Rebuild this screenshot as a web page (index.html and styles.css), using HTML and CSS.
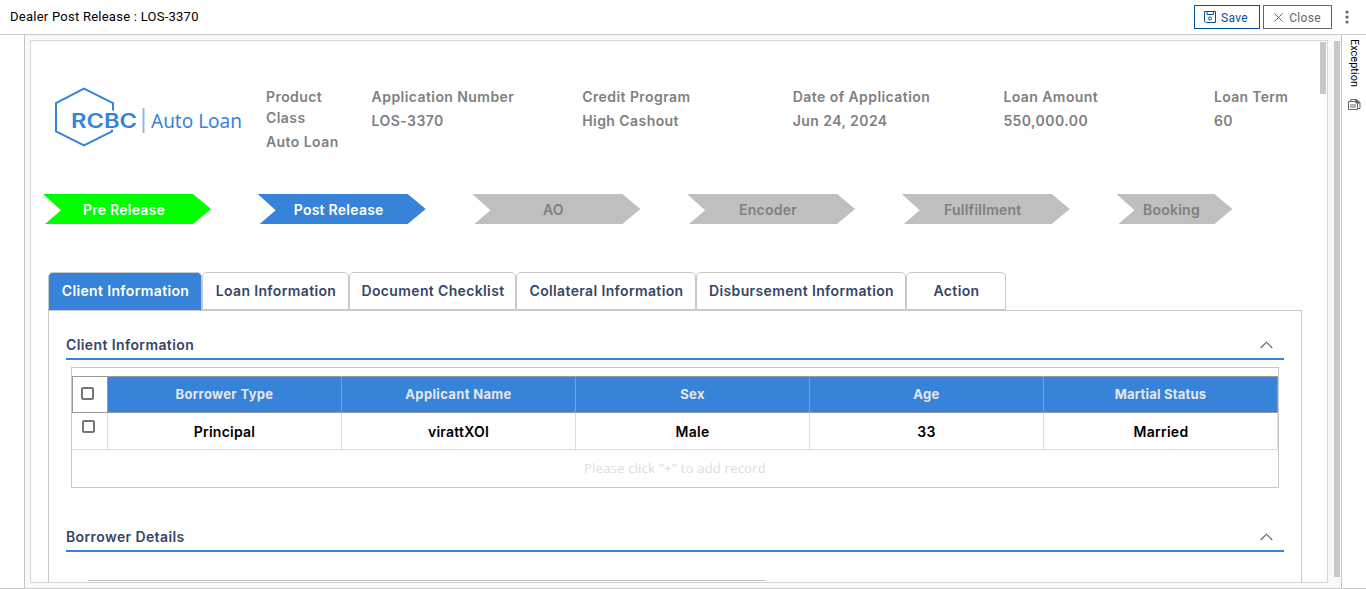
FILE: index.html
```html
<!DOCTYPE html>
<html lang="en">
<head>
<meta charset="utf-8">
<title>Dealer Post Release</title>
<link rel="stylesheet" href="styles.css">
</head>
<body>
<div class="app">
  <header class="topbar">
    <div class="title">Dealer Post Release : LOS-3370</div>
    <div class="actions">
      <button class="btn save"><svg width="12" height="12" viewBox="0 0 12 12" fill="none" stroke="#00539b"><path d="M.5.5h11v11H2l-1.500-1.500zM3 .5v3h6.500v-3"/><circle cx="6" cy="7.500" r="1.500"/></svg><span>Save</span></button>
      <button class="btn close"><svg width="9" height="9" viewBox="0 0 9 9" fill="none" stroke="#666"><path d="M.5.5l8 8M8.500.5l-8 8"/></svg><span>Close</span></button>
      <svg class="more" width="4" height="14" viewBox="0 0 4 14" fill="#666"><circle cx="2" cy="2" r="1.600"/><circle cx="2" cy="7" r="1.600"/><circle cx="2" cy="12" r="1.600"/></svg>
    </div>
  </header>
  <div class="body">
    <aside class="left"></aside>
    <main class="canvas">
      <div class="sheet">
        <section class="summary">
          <svg class="logo" width="200" height="62" viewBox="0 0 200 62">
            <g fill="none" stroke="#3783d9" stroke-width="2"><path d="M59 24.500V17L30 2.500 2 17v28.500l28 14 28-14V43.500"/></g>
            <path d="M89.500 22v25" stroke="#8db7e8" stroke-width="2"/>
            <text class="brand" x="17" y="42" textLength="66" lengthAdjust="spacingAndGlyphs">RCBC</text>
            <text class="product" x="97" y="42" textLength="91" lengthAdjust="spacingAndGlyphs">Auto Loan</text>
          </svg>
          <dl class="facts">
            <div class="fact first"><dt>Product Class</dt><dd>Auto Loan</dd></div>
            <div class="fact"><dt>Application Number</dt><dd>LOS-3370</dd></div>
            <div class="fact"><dt>Credit Program</dt><dd>High Cashout</dd></div>
            <div class="fact"><dt>Date of Application</dt><dd>Jun 24, 2024</dd></div>
            <div class="fact"><dt>Loan Amount</dt><dd>550,000.00</dd></div>
            <div class="fact last"><dt>Loan Term</dt><dd>60</dd></div>
          </dl>
        </section>
        <nav class="steps">
          <div class="step done">Pre Release</div>
          <div class="step current">Post Release</div>
          <div class="step">AO</div>
          <div class="step">Encoder</div>
          <div class="step">Fullfillment</div>
          <div class="step short">Booking</div>
        </nav>
        <div class="tabs">
          <div class="tab t1 active">Client Information</div>
          <div class="tab t2">Loan Information</div>
          <div class="tab t3">Document Checklist</div>
          <div class="tab t4">Collateral Information</div>
          <div class="tab t5">Disbursement Information</div>
          <div class="tab t6">Action</div>
        </div>
        <div class="pane">
          <div class="section-head"><span>Client Information</span><svg width="13" height="8" viewBox="0 0 13 8" fill="none" stroke="#4a5b7c" stroke-width="1.100"><path d="M.7 7l5.800-5.800L12.300 7"/></svg></div>
          <div class="grid-box">
            <div class="row head">
              <div class="check"><i class="box"></i></div>
              <div class="cell">Borrower Type</div><div class="cell">Applicant Name</div><div class="cell">Sex</div><div class="cell">Age</div><div class="cell status">Martial Status</div>
            </div>
            <div class="row data">
              <div class="check"><i class="box"></i></div>
              <div class="cell">Principal</div><div class="cell">virattXOI</div><div class="cell">Male</div><div class="cell">33</div><div class="cell">Married</div>
            </div>
            <div class="hint">Please click "+" to add record</div>
          </div>
          <div class="section-head second"><span>Borrower Details</span><svg width="13" height="8" viewBox="0 0 13 8" fill="none" stroke="#4a5b7c" stroke-width="1.100"><path d="M.7 7l5.800-5.800L12.300 7"/></svg></div>
          <div class="subframe"></div>
        </div>
        <div class="inner-thumb"></div>
      </div>
      <div class="outer-thumb"></div>
    </main>
    <aside class="right">
      <div class="exception">Exception</div>
      <svg width="13" height="11" viewBox="0 0 13 11" fill="none" stroke="#666"><path d="M2.500 2.500V.5h6l3.500 3v6h-2M.5 2.500h9v8h-9zM3 5v4M5 5v4M7 5v4"/><path d="M7 0l5 4H8z" fill="#666"/></svg>
    </aside>
  </div>
</div>
</body>
</html>
```
FILE: styles.css
```css
* { box-sizing: border-box; }
body { margin: 0; background: #fff; font-family: Inter, sans-serif; font-size: 14px; }
.app { width: 1366px; height: 589px; display: flex; flex-direction: column; overflow: hidden; border-bottom: 1px solid #ccc; }
.topbar { height: 35px; flex: none; border-bottom: 1px solid #ccc; display: flex; justify-content: space-between; padding-left: 10px; }
.title { font: 13px/33px Roboto, sans-serif; color: #000; letter-spacing: .25px; }
.actions { display: flex; padding: 5px 17px 0 0; gap: 3px; align-items: flex-start; }
.btn { height: 24px; border: 1px solid #666; background: #fff; color: #666; padding: 0; display: flex; align-items: center; justify-content: center; font: 12px/24px Roboto, sans-serif; letter-spacing: .3px; }
.btn span { padding-top: 1px; }
.save { width: 66px; border-color: #00539b; color: #00539b; gap: 5px; padding-right: 2px; }
.close { width: 69px; gap: 6px; }
.more { margin: 5px 0 0 10px; }
.body { flex: 1; display: flex; min-height: 0; }
.left { width: 25px; border-right: 1px solid #c4c4c4; }
.canvas { width: 1316px; background: #f8f9fb; display: flex; padding: 5px 1px 5px 5px; justify-content: space-between; }
.outer-thumb { width: 6px; height: 536px; margin-top: 1px; background: #c8c8c8; }
.right { width: 25px; border-left: 1px solid #c4c4c4; padding: 4px 0 0 6px; }
.exception { writing-mode: vertical-rl; font: 11px/13px Roboto, sans-serif; height: 60px; }
.right svg { display: block; }
.sheet { position: relative; width: 1298px; height: 543px; border: 1px solid #d3d6da; background: #fff; overflow: hidden; }
.inner-thumb { position: absolute; right: 1px; top: 1px; width: 6px; height: 52px; background: #c8c8c8; }
.summary { height: 153px; display: flex; padding: 45px 0 0 23px; }
.logo { flex: none; margin: 0 12px 0 0; }
.brand { font: 600 19.500px Inter, sans-serif; fill: #3783d9; }
.product { font: 20px "Noto Sans", sans-serif; fill: #3783d9; }
.facts { margin: 0; display: flex; color: #808080; font-weight: 600; line-height: 21px; letter-spacing: .43px; }
.fact { width: 210.6px; flex: none; }
.first { width: 105.6px; padding-right: 20px; }
.last { width: 90px; letter-spacing: .3px; }
.fact dd { margin: 3px 0 0; white-space: nowrap; }
.steps { display: flex; padding-left: 12px; gap: 46.700px; }
.step { width: 168px; height: 30px; flex: none; background: #bfbfbf; color: #808080; font-weight: 600; letter-spacing: .25px; line-height: 32px; text-align: center; padding-right: 6px; clip-path: polygon(0 0, calc(100% - 18px) 0, 100% 50%, calc(100% - 18px) 100%, 2px 100%, 18px 54%); }
.done { background: #0f0; color: #fff; }
.current { background: #3783d9; color: #fff; }
.short { width: 116px; }
.tabs { display: flex; margin: 48px 0 0 17px; height: 38px; }
.tab { border: 1px solid #c8c8c8; border-radius: 5px 5px 0 0; color: #344668; text-align: center; font-weight: 600; letter-spacing: .36px; line-height: 35px; white-space: nowrap; padding-left: 1px; }
.t1 { width: 154px; }
.t2 { width: 147px; }
.t3 { width: 167px; }
.t4 { width: 180px; }
.t5 { width: 210px; }
.t6 { width: 100px; }
.tab.active { background: #3783d9; color: #fff; border-bottom-color: #3783d9; }
.pane { width: 1254px; height: 300px; margin-left: 17px; border: 1px solid #c8c8c8; padding: 21px 17px 0; }
.section-head { height: 28px; border-bottom: 2px solid #3783d9; display: flex; justify-content: space-between; align-items: center; padding: 0 11px 2px 0; color: #344668; font-weight: 600; letter-spacing: .39px; }
.section-head svg { margin-top: 2px; }
.grid-box { width: 1208px; height: 121px; margin: 7px 0 0 5px; border: 1px solid #c8c8c8; padding-top: 8px; }
.row { display: grid; grid-template-columns: 35px 234px 234px 234px 234px 235px; width: 1206px; height: 37px; }
.row .cell { border-left: 1px solid #ddd; text-align: center; font-weight: 600; letter-spacing: .25px; }
.head { border: 1px solid #999; }
.row.head .cell { background: #3783d9; color: #e4e7ec; border-left-color: #8c9db0; line-height: 35px; font-size: 13px; font-weight: 700; letter-spacing: .35px; }
.row.head { grid-template-columns: 34px 234px 234px 234px 234px 234px; }
.row.head .status { letter-spacing: .2px; }
.data { border-bottom: 1px solid #ddd; border-right: 1px solid #ddd; line-height: 38px; }
.box { display: block; width: 13px; height: 13px; border: 2px solid #767676; border-radius: 2px; margin: 10px 0 0 8px; }
.data .box { margin: 7px 0 0 10px; }
.hint { text-align: center; color: #ddd; font: 13px/37px "Open Sans", sans-serif; letter-spacing: .22px; }
.section-head.second { margin-top: 36px; }
.subframe { width: 678px; height: 20px; margin: 28px 0 0 22px; border-top: 1px solid #c8c8c8; }
```
